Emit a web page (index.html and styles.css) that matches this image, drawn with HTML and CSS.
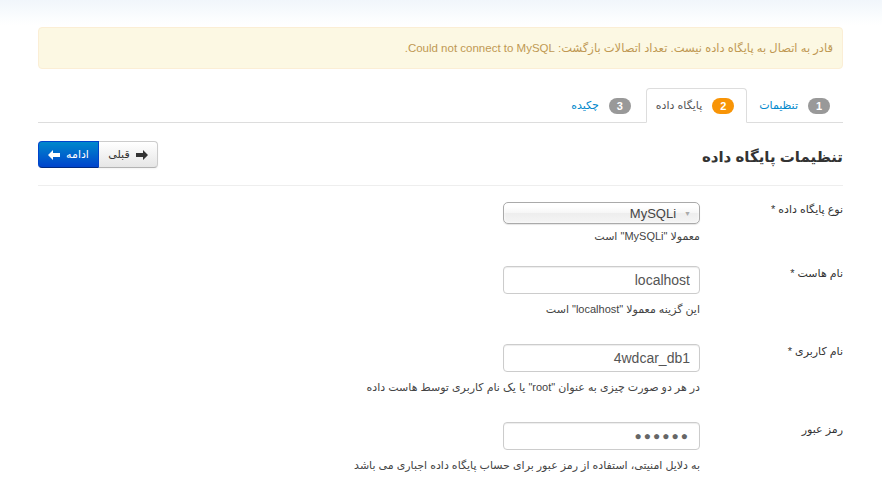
FILE: index.html
```html
<!DOCTYPE html>
<html lang="fa" dir="rtl">
<head>
<meta charset="utf-8">
<title>نصب جوملا</title>
<link rel="stylesheet" href="styles.css">
</head>
<body>
<div class="container">
  <div class="alert">قادر به اتصال به پایگاه داده نیست. تعداد اتصالات بازگشت: Could not connect to MySQL.</div>

  <ul class="tabs">
    <li class="tab"><a href="#"><span class="badge">1</span><span class="tab-text">تنظیمات</span></a></li>
    <li class="tab active"><a href="#"><span class="badge badge-warning">2</span><span class="tab-text">پایگاه داده</span></a></li>
    <li class="tab"><a href="#"><span class="badge">3</span><span class="tab-text">چکیده</span></a></li>
  </ul>

  <div class="page-head">
    <h3 class="title">تنظیمات پایگاه داده</h3>
    <div class="btn-group">
      <a class="btn" href="#"><svg class="ico" viewBox="0 0 12 10" width="12" height="10"><path d="M12 5 L7 0 L7 3 L0 3 L0 7 L7 7 L7 10 Z"/></svg><span>قبلی</span></a>
      <a class="btn btn-primary" href="#"><span>ادامه</span><svg class="ico" viewBox="0 0 12 10" width="12" height="10"><path d="M0 5 L5 0 L5 3 L12 3 L12 7 L5 7 L5 10 Z"/></svg></a>
    </div>
  </div>

  <div class="divider"></div>

  <form class="form">
    <div class="row row-select">
      <label class="label">نوع پایگاه داده <span class="star">*</span></label>
      <div class="controls">
        <div class="select"><span class="select-arrow">▼</span><span class="select-text">MySQLi</span></div>
        <div class="help help-tight">معمولا "MySQLi" است</div>
      </div>
    </div>
    <div class="row">
      <label class="label">نام هاست <span class="star">*</span></label>
      <div class="controls">
        <input class="input" type="text" value="localhost">
        <div class="help">این گزینه معمولا "localhost" است</div>
      </div>
    </div>
    <div class="row">
      <label class="label">نام کاربری <span class="star">*</span></label>
      <div class="controls">
        <input class="input" type="text" value="4wdcar_db1">
        <div class="help">در هر دو صورت چیزی به عنوان "root" یا یک نام کاربری توسط هاست داده</div>
      </div>
    </div>
    <div class="row">
      <label class="label">رمز عبور</label>
      <div class="controls">
        <input class="input input-pass" type="text" value="●●●●●●">
        <div class="help">به دلایل امنیتی، استفاده از رمز عبور برای حساب پایگاه داده اجباری می باشد</div>
      </div>
    </div>
  </form>
</div>
</body>
</html>
```

FILE: styles.css
```css
html, body {
  margin: 0;
  padding: 0;
}
body {
  font-family: "Liberation Sans", "DejaVu Sans", sans-serif;
  font-size: 11px;
  color: #333;
  background: linear-gradient(#f1f6fb 0px, #fbfdfe 18px, #ffffff 26px) no-repeat;
  background-color: #fff;
  min-height: 490px;
}
.container {
  width: 805px;
  margin: 0 39px 0 38px;
  padding-top: 27px;
}
.alert {
  box-sizing: border-box;
  height: 42px;
  background: #fcf8e3;
  border: 1px solid #fbeed5;
  border-radius: 4px;
  color: #c09853;
  padding: 12px 9px 0 14px;
  line-height: 16px;
  font-size: 11.5px;
  text-align: right;
}
.tabs {
  list-style: none;
  margin: 19px 0 0;
  padding: 0;
  display: flex;
  border-bottom: 1px solid #ddd;
  height: 34px;
}
.tab {
  margin-left: 2px;
  margin-bottom: -1px;
}
.tab a {
  box-sizing: border-box;
  display: flex;
  align-items: center;
  gap: 10px;
  height: 35px;
  padding: 0 12px 0 9px;
  border: 1px solid transparent;
  border-radius: 4px 4px 0 0;
  text-decoration: none;
  color: #0088cc;
  font-size: 11px;
}
.tab.active a {
  background: #fff;
  border-color: #ddd #ddd transparent;
  color: #555;
}
.badge {
  display: inline-block;
  box-sizing: border-box;
  min-width: 22px;
  height: 16px;
  line-height: 16px;
  border-radius: 9px;
  background: #999;
  color: #fff;
  font-size: 11px;
  font-weight: bold;
  text-align: center;
}
.badge-warning {
  background: #f89406;
}
.page-head {
  display: flex;
  justify-content: space-between;
  align-items: center;
  margin-top: 18px;
  height: 27px;
}
.title {
  margin: 0;
  font-size: 15px;
  font-weight: bold;
  color: #333;
  line-height: 27px;
  padding-top: 3px;
}
.btn-group {
  display: flex;
  direction: ltr;
  flex-direction: row-reverse;
}
.btn {
  box-sizing: border-box;
  display: flex;
  align-items: center;
  justify-content: center;
  gap: 6px;
  height: 27px;
  text-decoration: none;
  font-size: 11px;
}
.btn .ico path {
  fill: currentColor;
}
.btn:not(.btn-primary) {
  width: 59px;
  color: #333;
  background: linear-gradient(#ffffff, #e6e6e6);
  border: 1px solid #ccc;
  border-bottom-color: #b3b3b3;
  border-radius: 0 4px 4px 0;
  border-left: none;
  box-shadow: inset 0 1px 0 rgba(255,255,255,.2), 0 1px 2px rgba(0,0,0,.05);
  direction: ltr;
  flex-direction: row-reverse;
}
.btn-primary {
  width: 61px;
  color: #fff;
  background: linear-gradient(#0088cc, #0044cc);
  border: 1px solid #0044cc;
  border-bottom-color: #002a80;
  border-radius: 4px 0 0 4px;
  direction: ltr;
  flex-direction: row-reverse;
}
.divider {
  height: 1px;
  background: #eee;
  margin-top: 17px;
}
.form {
  margin-top: 16px;
}
.row {
  display: flex;
  margin-bottom: 26px;
}
.row-select {
  margin-bottom: 21px;
}
.label {
  width: 143px;
  flex: none;
  line-height: 14px;
  font-size: 11px;
  color: #333;
  text-align: right;
}
.controls {
  flex: 1;
}
.select {
  box-sizing: border-box;
  width: 197px;
  height: 22px;
  border: 1px solid #aaa;
  border-radius: 5px;
  background: linear-gradient(#ffffff 20%, #f6f6f6 50%, #eeeeee 52%, #f4f4f4 100%);
  box-shadow: inset 0 0 3px #fff, 0 1px 1px rgba(0,0,0,.1);
  display: flex;
  align-items: center;
  padding-right: 8px;
  gap: 8px;
  font-size: 13px;
  color: #444;
}
.select-arrow {
  font-size: 7px;
  color: #aaa;
}
.select-text {
  direction: ltr;
}
.input {
  box-sizing: border-box;
  display: block;
  width: 197px;
  height: 28px;
  border: 1px solid #ccc;
  border-radius: 4px;
  box-shadow: inset 0 1px 1px rgba(0,0,0,.075);
  padding: 0 9px;
  font-family: "Liberation Sans", sans-serif;
  font-size: 14px;
  color: #555;
  text-align: right;
  direction: rtl;
  margin: 0;
}
.input-pass {
  font-size: 12px;
  letter-spacing: 2px;
  color: #666;
}
.help {
  margin-top: 6px;
  line-height: 18px;
  font-size: 11px;
  color: #444;
}
.help-tight {
  margin-top: 3px;
}
```
